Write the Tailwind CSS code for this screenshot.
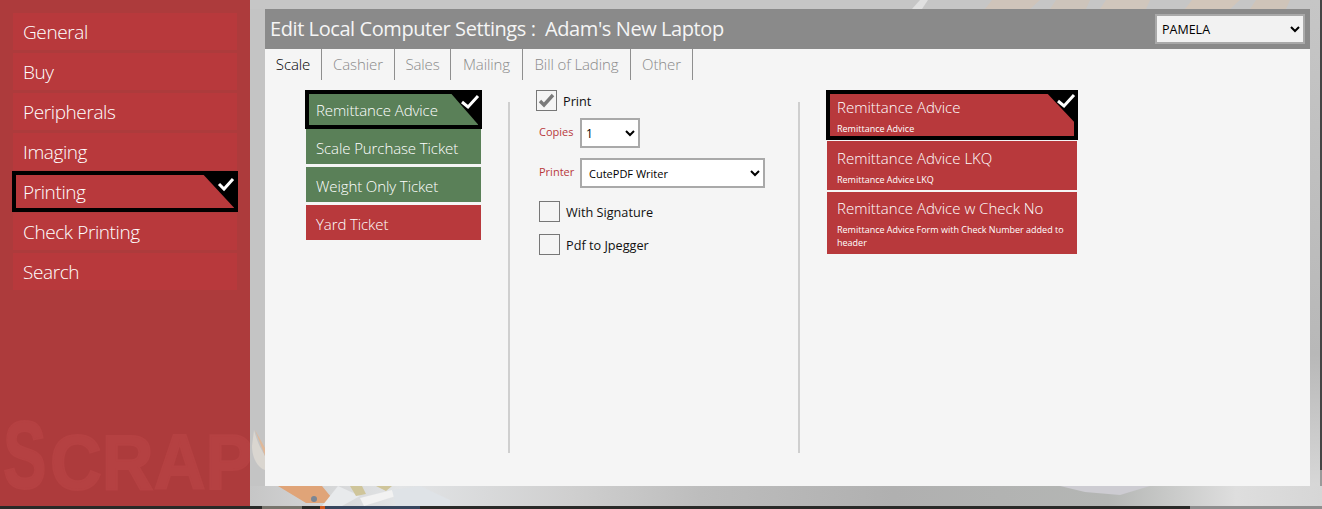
<!DOCTYPE html>
<html lang="en">
<head>
    <meta charset="UTF-8">
    <title>Edit Local Computer Settings</title>
    <script src="https://cdn.jsdelivr.net/npm/@tailwindcss/browser@4"></script>
</head>
<body class="h-[509px] w-[1322px] overflow-hidden bg-[#c4c4c4] font-['Open_Sans',sans-serif]">
    <div class="relative flex h-[509px] w-[1322px] overflow-hidden">
        <!-- background art behind the panel -->
        <svg class="absolute left-0 top-0" width="1322" height="509" viewBox="0 0 1322 509">
            <defs>
                <linearGradient id="strip" x1="0" x2="1" y1="0" y2="0">
                    <stop offset="0" stop-color="#c6c6c6"/>
                    <stop offset="0.14" stop-color="#e2e4e6"/>
                    <stop offset="0.3" stop-color="#cfcfcf"/>
                    <stop offset="0.42" stop-color="#bdbdbd"/>
                    <stop offset="0.6" stop-color="#b0b0b0"/>
                    <stop offset="0.8" stop-color="#b4b6b4"/>
                    <stop offset="0.92" stop-color="#dedede"/>
                    <stop offset="1" stop-color="#d6d6d6"/>
                </linearGradient>
                <linearGradient id="side" x1="0" x2="0" y1="0" y2="1">
                    <stop offset="0" stop-color="#c6c6c6"/>
                    <stop offset="0.7" stop-color="#b8b8b8"/>
                    <stop offset="1" stop-color="#dcdcdc"/>
                </linearGradient>
                <filter id="soft"><feGaussianBlur stdDeviation="0.7"/></filter>
            </defs>
            <rect x="250" y="0" width="1072" height="9" fill="#c6c6c6"/>
            <rect x="1310" y="0" width="10" height="506" fill="url(#side)"/>
            <rect x="1320" y="0" width="2" height="470" fill="#454545"/>
            <rect x="1320" y="470" width="2" height="36" fill="#9a9a9a"/>
            <rect x="250" y="486" width="1072" height="20" fill="url(#strip)"/>
            <g filter="url(#soft)">
                <path d="M912 9L920 0H928L922 9Z" fill="#e0e0e0"/>
                <path d="M985 9L992 0H1040L1030 9Z" fill="#cfc4ba"/>
                <path d="M1050 9L1056 0H1090L1086 9Z" fill="#cdc4bb"/>
                <path d="M1100 9L1106 0H1150L1146 9Z" fill="#d0c6bc"/>
                <path d="M1185 9L1192 0H1240L1230 9Z" fill="#d2c6ba"/>
                <path d="M1250 9L1256 0H1290L1286 9Z" fill="#cfc4b9"/>
                <path d="M254 430C258 445 262 450 265 456V470C258 468 252 458 252 446Z" fill="#dad6d0"/>
                <path d="M255 430L265 448V456Z" fill="#e0b898"/>
                <path d="M278 486H322L336 503H306Z" fill="#e0a478"/>
                <circle cx="314" cy="499" r="3" fill="#7b8694"/>
                <path d="M338 486L360 496L342 506H322Z" fill="#e8eaec"/>
                <path d="M350 486H362L366 494L356 496Z" fill="#cfc59a"/>
                <path d="M376 486H392L386 491Z" fill="#cfc59a"/>
                <path d="M360 498L392 490L396 496L364 506Z" fill="#f2f2f2"/>
                <path d="M392 490L420 486L450 500V506H396Z" fill="#dfe3e7"/>
                <path d="M1060 486H1150L1120 495L1085 492Z" fill="#cdccd2"/>
            </g>
            <rect x="0" y="506" width="1322" height="3" fill="#2a2a28"/>
            <rect x="262" y="506" width="40" height="3" fill="#77746c"/>
            <rect x="320" y="506" width="100" height="3" fill="#37465e"/>
            <rect x="320" y="506" width="5" height="3" fill="#d05a20"/>
            <rect x="1190" y="506" width="132" height="3" fill="#8e8e8e"/>
        </svg>

        <!-- sidebar -->
        <aside class="relative flex h-[506px] w-[250px] shrink-0 flex-col gap-[3px] overflow-hidden bg-[#ad3b3c] pl-[13px] pr-[13px] pt-[13px] text-[19px] font-light tracking-[-0.4px] text-white">
            <a class="flex h-[37px] items-center bg-[#b8393c] pl-[10px] pt-[1px]">General</a>
            <a class="flex h-[37px] items-center bg-[#b8393c] pl-[10px] pt-[1px]">Buy</a>
            <a class="flex h-[37px] items-center bg-[#b8393c] pl-[10px] pt-[1px]">Peripherals</a>
            <a class="flex h-[37px] items-center bg-[#b8393c] pl-[10px] pt-[1px]">Imaging</a>
            <a class="relative -mx-px -my-[2px] flex h-[41px] items-center border-4 border-black bg-[#b8393c] pl-[7px] pt-[1px]">
                Printing
                <svg class="absolute -right-[4px] -top-[4px]" width="38" height="41" viewBox="0 0 38 41">
                    <path d="M0 0H38V41Z" fill="#000"/>
                    <path d="M19 13L24 18L33 8" fill="none" stroke="#fff" stroke-width="3"/>
                </svg>
            </a>
            <a class="flex h-[37px] items-center bg-[#b8393c] pl-[10px] pt-[1px]">Check Printing</a>
            <a class="flex h-[37px] items-center bg-[#b8393c] pl-[10px] pt-[1px]">Search</a>
            <div class="absolute left-[3px] top-[407px] flex items-end whitespace-nowrap font-['Liberation_Sans',sans-serif] font-bold leading-none tracking-normal text-[#b54142] [-webkit-text-stroke:2px_#b54142]">
                <span class="w-[47px] origin-left text-[96px] [transform:scaleX(0.68)]">S</span><span class="origin-left pb-[2px] text-[78px] [transform:scaleX(0.92)]">CRAP</span>
            </div>
        </aside>

        <!-- settings panel -->
        <main class="relative ml-[15px] mt-[9px] flex h-[477px] w-[1045px] flex-col bg-[#f5f5f5]">
            <header class="flex h-[40px] shrink-0 items-center justify-between bg-[#8a8a8a] pl-[5px] pr-[5px]">
                <h1 class="text-[20px] tracking-[-0.42px] text-[#f5f5f5]">Edit Local Computer Settings :&nbsp; Adam's New Laptop</h1>
                <select class="h-[30px] w-[150px] border-2 border-[#a9a9a9] bg-[#f2f2f2] pl-[1px] text-[12.5px] text-black">
                    <option>PAMELA</option>
                </select>
            </header>

            <nav class="flex h-[31px] shrink-0 text-[15px] font-light tracking-[-0.1px] text-[#8a8a8a]">
                <a class="flex w-[57px] items-center justify-center border-r border-[#8f8f8f] text-black">Scale</a>
                <a class="flex w-[73px] items-center justify-center border-r border-[#8f8f8f]">Cashier</a>
                <a class="flex w-[56px] items-center justify-center border-r border-[#8f8f8f]">Sales</a>
                <a class="flex w-[72px] items-center justify-center border-r border-[#8f8f8f]">Mailing</a>
                <a class="flex w-[108px] items-center justify-center border-r border-[#8f8f8f]">Bill of Lading</a>
                <a class="flex w-[62px] items-center justify-center border-r border-[#8f8f8f]">Other</a>
            </nav>

            <div class="flex min-h-0 flex-1">
                <!-- report list -->
                <section class="ml-[40px] mt-[10px] flex w-[177px] shrink-0 flex-col text-[15px] font-light tracking-[-0.1px] text-white">
                    <a class="relative flex h-[39px] items-center border-4 border-black bg-[#5a8058] pl-[7px] pt-[1px]">
                        Remittance Advice
                        <svg class="absolute -right-[4px] -top-[4px]" width="34" height="39" viewBox="0 0 34 39">
                            <path d="M0 0H34V39Z" fill="#000"/>
                            <path d="M14 12L20 17L30 6" fill="none" stroke="#fff" stroke-width="3"/>
                        </svg>
                    </a>
                    <a class="mx-px flex h-[35px] items-center bg-[#5a8058] pl-[10px] pt-[3px]">Scale Purchase Ticket</a>
                    <a class="mx-px mt-[3px] flex h-[35px] items-center bg-[#5a8058] pl-[10px] pt-[3px]">Weight Only Ticket</a>
                    <a class="mx-px mt-[3px] flex h-[35px] items-center bg-[#b8393c] pl-[10px] pt-[3px]">Yard Ticket</a>
                </section>

                <div class="ml-[26px] mt-[22px] h-[351px] w-[2px] shrink-0 bg-[#cfcfcf]"></div>

                <!-- print options -->
                <section class="ml-[26px] mt-[10px] flex w-[262px] shrink-0 flex-col text-[12.7px] text-[#111]">
                    <label class="flex h-[21px] items-center gap-[6px]">
                        <span class="flex size-[21px] items-center justify-center border border-[#777] bg-[#f5f5f5]">
                            <svg width="17" height="15" viewBox="0 0 17 15"><path d="M2 8L6 12L15 2" fill="none" stroke="#7a7a7a" stroke-width="3.4"/></svg>
                        </span>
                        <span class="pt-[3px]">Print</span>
                    </label>
                    <div class="ml-[3px] mt-[7px] flex h-[30px] items-center gap-[5px]">
                        <span class="w-[36px] pb-[1px] text-[11px] text-[#b8393c]">Copies</span>
                        <select class="h-[30px] w-[60px] border-2 border-[#a9a9a9] bg-white text-[12px] text-black"><option>1</option></select>
                    </div>
                    <div class="ml-[3px] mt-[10px] flex h-[30px] items-center gap-[5px]">
                        <span class="w-[36px] pb-[1px] text-[11px] text-[#b8393c]">Printer</span>
                        <select class="h-[30px] w-[185px] border-2 border-[#a9a9a9] bg-white pl-[3px] text-[11px] text-black"><option>CutePDF Writer</option></select>
                    </div>
                    <label class="ml-[3px] mt-[13px] flex h-[21px] items-center gap-[6px]">
                        <span class="size-[21px] border border-[#777] bg-[#f5f5f5]"></span>
                        <span class="pt-[2px]">With Signature</span>
                    </label>
                    <label class="ml-[3px] mt-[12px] flex h-[21px] items-center gap-[6px]">
                        <span class="size-[21px] border border-[#777] bg-[#f5f5f5]"></span>
                        <span class="pt-[2px]">Pdf to Jpegger</span>
                    </label>
                </section>

                <div class="mt-[22px] h-[351px] w-[2px] shrink-0 bg-[#cfcfcf]"></div>

                <!-- report forms -->
                <section class="ml-[26px] mt-[10px] flex w-[252px] shrink-0 flex-col text-white">
                    <a class="relative flex h-[50px] flex-col border-4 border-black bg-[#b8393c] pl-[7px]">
                        <span class="mt-[3px] text-[15px] font-light leading-[20px]">Remittance Advice</span>
                        <span class="mt-[6px] text-[9px] leading-[12px]">Remittance Advice</span>
                        <svg class="absolute -right-[4px] -top-[4px]" width="34" height="36" viewBox="0 0 34 36">
                            <path d="M0 0H34V36Z" fill="#000"/>
                            <path d="M14 11L20 16L30 5" fill="none" stroke="#fff" stroke-width="3"/>
                        </svg>
                    </a>
                    <a class="mx-px mt-px flex h-[49px] flex-col bg-[#b8393c] pl-[10px]">
                        <span class="mt-[7px] text-[15px] font-light leading-[20px]">Remittance Advice LKQ</span>
                        <span class="mt-[6px] text-[9px] leading-[12px]">Remittance Advice LKQ</span>
                    </a>
                    <a class="mx-px mt-[2px] flex h-[62px] flex-col bg-[#b8393c] pl-[10px] pr-[8px]">
                        <span class="mt-[6px] text-[15px] font-light leading-[20px]">Remittance Advice w Check No</span>
                        <span class="mt-[5px] text-[9px] leading-[13px]">Remittance Advice Form with Check Number added to header</span>
                    </a>
                </section>
            </div>
        </main>
    </div>
</body>
</html>
